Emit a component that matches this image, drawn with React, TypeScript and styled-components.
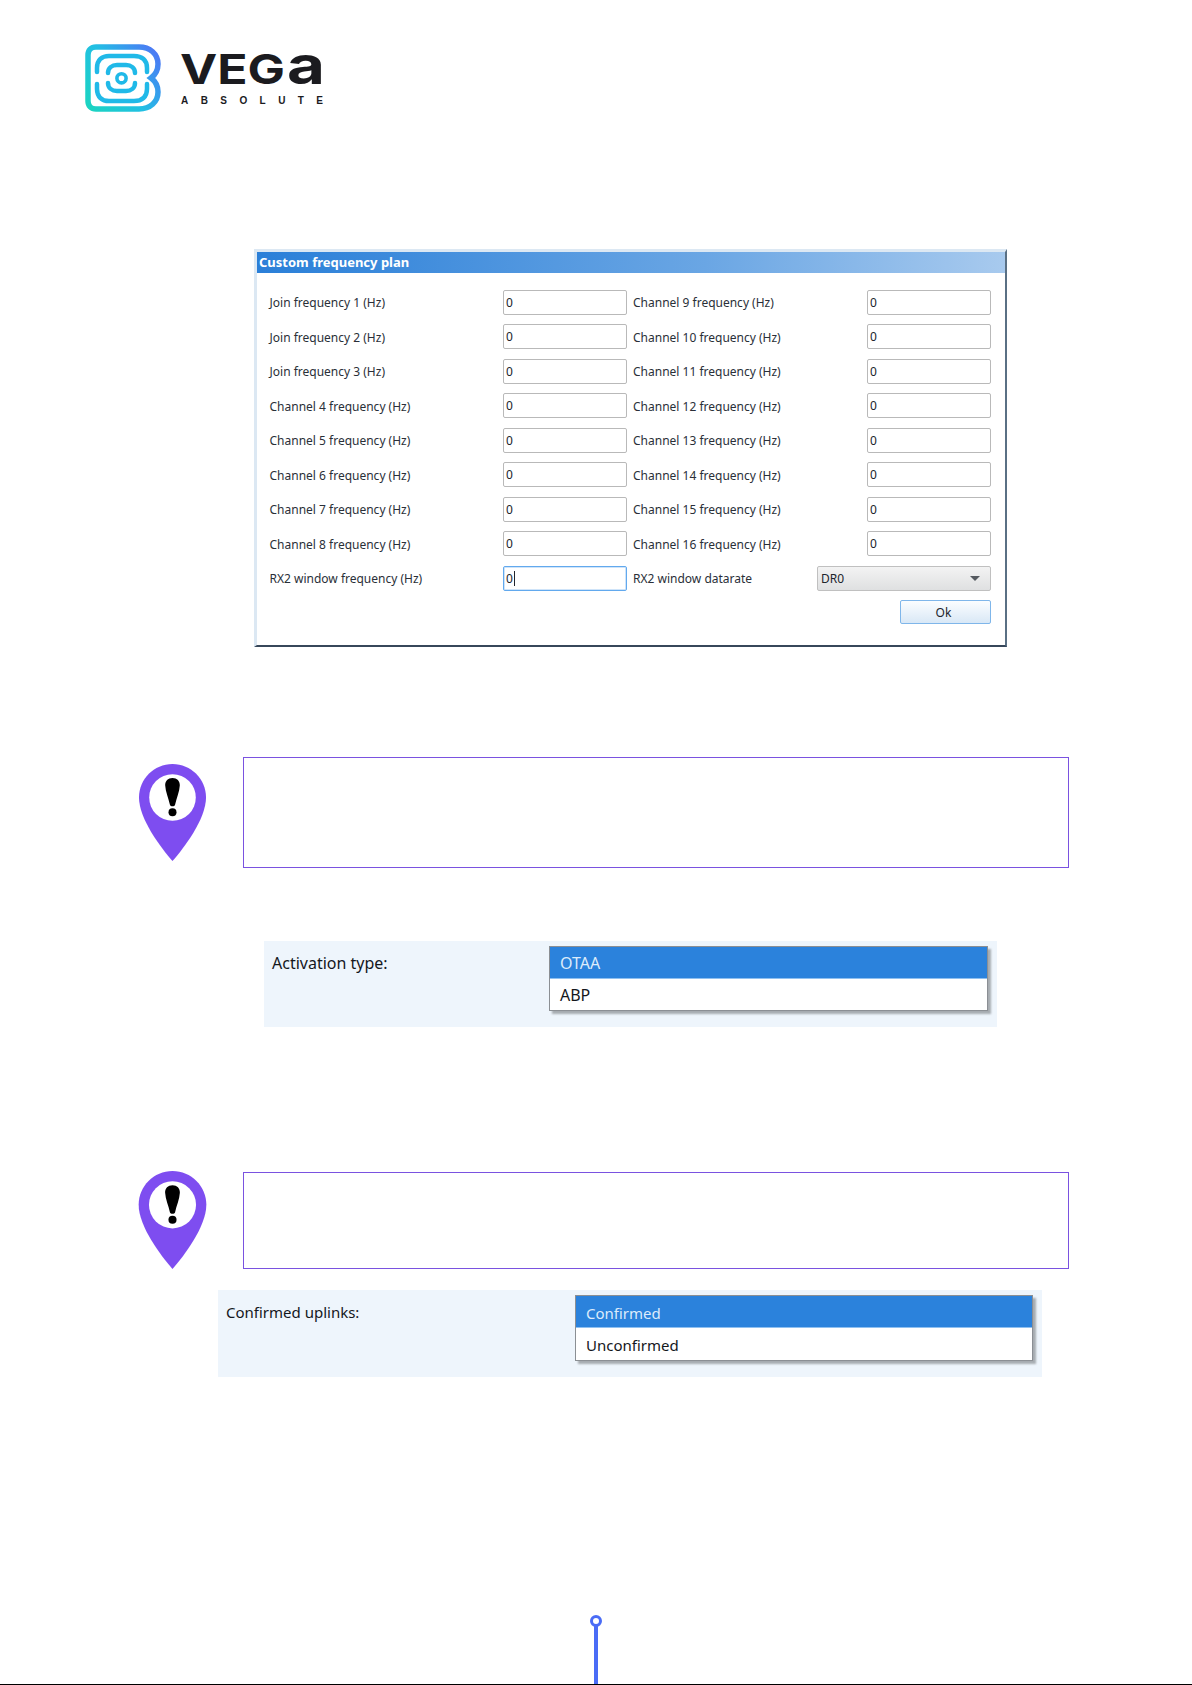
import styled, { createGlobalStyle } from "styled-components";

const GlobalStyle = createGlobalStyle`
  html, body {
    margin: 0;
    padding: 0;
    background: #ffffff;
  }
  body {
    font-family: "Noto Sans", "Liberation Sans", sans-serif;
  }
`;

const Page = styled.div`
  width: 1192px;
  height: 1685px;
  display: flex;
  flex-direction: column;
  overflow: hidden;
`;

const Header = styled.header`
  display: flex;
  align-items: flex-start;
  gap: 18px;
  margin: 44px 0 0 85px;
`;

const Wordmark = styled.svg`
  margin-top: -16px;
  display: block;
`;

const MarkText = styled.text`
  font-family: Inter, "Liberation Sans", sans-serif;
  font-weight: 700;
  fill: #1b1b1f;
`;

const TagText = styled.text`
  font-family: "Liberation Sans", sans-serif;
  font-size: 10px;
  font-weight: 700;
  fill: #1b1b1f;
`;

const Dialog = styled.section`
  box-sizing: border-box;
  width: 753px;
  height: 398px;
  margin: 137px 0 0 254px;
  background: #ffffff;
  border: 3px solid #dce8f3;
  border-right: 2px solid #5a7084;
  border-bottom: 2px solid #37475a;
`;

const TitleBar = styled.div`
  box-sizing: border-box;
  height: 21px;
  padding: 0 0 1px 2px;
  display: flex;
  align-items: center;
  background: linear-gradient(90deg, #2a7fd8 0%, #6aa6e4 60%, #a8caee 100%);
  color: #ffffff;
  font-family: "Noto Sans", sans-serif;
  font-size: 13px;
  font-weight: 700;
`;

const Form = styled.div`
  display: flex;
  flex-direction: column;
  gap: 9.5px;
  padding: 16.5px 0 0 12.5px;
`;

const FormRow = styled.div`
  display: grid;
  grid-template-columns: 233.5px 124px 240px 124px;
  height: 25px;
  align-items: center;
`;

const Label = styled.span<{ $right?: boolean }>`
  padding: 1px 0 0 ${(p) => (p.$right ? "6px" : "0")};
  font-size: 12px;
  color: #2a2f38;
  white-space: nowrap;
`;

const Field = styled.div<{ $focused?: boolean }>`
  box-sizing: border-box;
  height: 25px;
  display: flex;
  align-items: center;
  padding-left: 2px;
  border: 1px solid ${(p) => (p.$focused ? "#62a9ee" : "#b9b9b9")};
  box-shadow: ${(p) => (p.$focused ? "inset 0 0 0 1px #cfe4f9" : "none")};
  border-radius: 2px;
  background: #ffffff;
  font-size: 12px;
  color: #20242c;
`;

const Caret = styled.span`
  width: 1px;
  height: 15px;
  margin-left: 1px;
  background: #20242c;
`;

const DatarateCell = styled.div`
  grid-column: 3 / 5;
  display: flex;
  align-items: center;
  justify-content: space-between;
`;

const Select = styled.div`
  box-sizing: border-box;
  width: 174px;
  height: 25px;
  display: flex;
  align-items: center;
  justify-content: space-between;
  padding: 0 10px 0 3px;
  border: 1px solid #c0c0c0;
  border-radius: 2px;
  background: linear-gradient(180deg, #f3f3f3 0%, #dfe0e1 100%);
  font-size: 12px;
  color: #20242c;
`;

const Arrow = styled.span`
  width: 0;
  height: 0;
  border-left: 5px solid transparent;
  border-right: 5px solid transparent;
  border-top: 5px solid #555a60;
`;

const ButtonRow = styled.div`
  display: flex;
  justify-content: flex-end;
  padding-right: 14px;
`;

const OkButton = styled.button`
  box-sizing: border-box;
  width: 91px;
  height: 24px;
  padding: 0 4px 0 0;
  border: 1px solid #7fb6ea;
  border-radius: 2px;
  background: linear-gradient(180deg, #fbfdff 0%, #d9e8f6 100%);
  font-family: "Noto Sans", sans-serif;
  font-size: 12px;
  color: #20242c;
`;

const NoteRow = styled.div<{ $top: number }>`
  display: flex;
  align-items: flex-start;
  margin: ${(p) => p.$top}px 0 0 139px;
`;

const PinIcon = styled.svg<{ $offset: number; $gap: number; $shift: number }>`
  display: block;
  flex: none;
  margin-top: ${(p) => p.$offset}px;
  margin-right: ${(p) => p.$gap}px;
  margin-left: ${(p) => p.$shift}px;
`;

const NoteBox = styled.div<{ $height: number; $offset: number }>`
  box-sizing: border-box;
  width: 826px;
  height: ${(p) => p.$height}px;
  margin-top: ${(p) => p.$offset}px;
  border: 1px solid #7a52e0;
`;

const OptionPanel = styled.div<{
  $top: number;
  $left: number;
  $width: number;
  $height: number;
  $listLeft: number;
  $fontSize: number;
}>`
  box-sizing: border-box;
  display: grid;
  grid-template-columns: ${(p) => p.$listLeft}px 1fr;
  align-items: start;
  width: ${(p) => p.$width}px;
  height: ${(p) => p.$height}px;
  margin: ${(p) => p.$top}px 0 0 ${(p) => p.$left}px;
  padding: 5px 9px 0 8px;
  background: #eef5fc;
  font-size: ${(p) => p.$fontSize}px;
`;

const PanelLabel = styled.span`
  box-sizing: border-box;
  display: flex;
  align-items: center;
  height: 32px;
  padding-top: 2px;
  font-family: "Noto Sans", sans-serif;
  color: #14171c;
`;

const OptionList = styled.ul`
  margin: 0;
  padding: 0;
  list-style: none;
  border: 1px solid #8b8f94;
  background: #ffffff;
  box-shadow: 3px 3px 2px rgba(0, 0, 0, 0.3);
`;

const Option = styled.li<{ $selected?: boolean; $rowHeight: number }>`
  box-sizing: border-box;
  height: ${(p) => p.$rowHeight}px;
  display: flex;
  align-items: center;
  padding: 2px 0 0 10px;
  background: ${(p) => (p.$selected ? "#2b82dc" : "#ffffff")};
  color: ${(p) => (p.$selected ? "#dcebfb" : "#14171c")};
  border-bottom: ${(p) => (p.$selected ? "1px solid #8fc0f0" : "none")};
`;

const Footer = styled.footer`
  margin-top: auto;
  height: 70px;
  display: flex;
  justify-content: center;
  box-sizing: border-box;
  border-bottom: 1px solid #000000;
`;

const FooterMark = styled.svg`
  display: block;
`;

const leftLabels = [
  "Join frequency 1 (Hz)",
  "Join frequency 2 (Hz)",
  "Join frequency 3 (Hz)",
  "Channel 4 frequency (Hz)",
  "Channel 5 frequency (Hz)",
  "Channel 6 frequency (Hz)",
  "Channel 7 frequency (Hz)",
  "Channel 8 frequency (Hz)",
];

const rightLabels = [
  "Channel 9 frequency (Hz)",
  "Channel 10 frequency (Hz)",
  "Channel 11 frequency (Hz)",
  "Channel 12 frequency (Hz)",
  "Channel 13 frequency (Hz)",
  "Channel 14 frequency (Hz)",
  "Channel 15 frequency (Hz)",
  "Channel 16 frequency (Hz)",
];

function Logo() {
  return (
    <Header>
      <svg width="77" height="68" viewBox="0 0 77 68" fill="none">
        <defs>
          <linearGradient id="outer" x1="0" y1="68" x2="77" y2="10" gradientUnits="userSpaceOnUse">
            <stop offset="0" stopColor="#1ad6bd" />
            <stop offset="0.5" stopColor="#22bfe4" />
            <stop offset="1" stopColor="#4f74f6" />
          </linearGradient>
        </defs>
        <path
          d="M11 3H54C65 3 73 10 73 20C73 26 70 31 66 34C70 37 73 42 73 48C73 58 65 65 54 65H11C6 65 3 62 3 57V11C3 6 6 3 11 3Z"
          stroke="url(#outer)"
          strokeWidth="5.5"
        />
        <g stroke="#20b9e8" strokeWidth="4.5" strokeLinecap="round">
          <path d="M12 28V24C12 16 17 12 24 12H49C57 12 62 16 62 24V28" />
          <path d="M12 40V45C12 53 17 57 24 57H49C57 57 62 53 62 45V40" />
          <path d="M23 29C23 24 27 21 32 21H41C46 21 50 24 50 29" />
          <path d="M23 39C23 44 27 47 32 47H41C46 47 50 44 50 39" />
        </g>
        <circle cx="36.5" cy="34.3" r="4.6" stroke="#20b9e8" strokeWidth="3.6" />
      </svg>
      <Wordmark width="145" height="80" viewBox="0 0 145 80">
        <MarkText x="0" y="56" fontSize="41" textLength="105" lengthAdjust="spacingAndGlyphs">
          VEG
        </MarkText>
        <MarkText x="107" y="56" fontSize="53" textLength="38" lengthAdjust="spacingAndGlyphs">
          a
        </MarkText>
        <TagText x="1" y="76" textLength="142">
          ABSOLUTE
        </TagText>
      </Wordmark>
    </Header>
  );
}

function Pin({ width, height, offset, gap, shift }: { width: number; height: number; offset: number; gap: number; shift: number }) {
  return (
    <PinIcon width={width} height={height} viewBox="0 0 67 97" $offset={offset} $gap={gap} $shift={shift}>
      <path
        d="M33.5 0C52 0 67 15 67 33.5C67 55 45 84 33.5 97C22 84 0 55 0 33.5C0 15 15 0 33.5 0Z"
        fill="#7e4df0"
      />
      <circle cx="33.5" cy="33.5" r="23.3" fill="#ffffff" />
      <path
        d="M33.5 14C38 14 41 17 40.8 21.5C40.5 28 37.5 34 36 41C35.5 42.8 31.5 42.8 31 41C29.5 34 26.5 28 26.2 21.5C26 17 29 14 33.5 14Z"
        fill="#000000"
      />
      <circle cx="33.5" cy="48.3" r="4" fill="#000000" />
    </PinIcon>
  );
}

export default function App() {
  return (
    <Page>
      <GlobalStyle />
      <Logo />

      <Dialog>
        <TitleBar>Custom frequency plan</TitleBar>
        <Form>
          {leftLabels.map((label, i) => (
            <FormRow key={label}>
              <Label>{label}</Label>
              <Field>0</Field>
              <Label $right>{rightLabels[i]}</Label>
              <Field>0</Field>
            </FormRow>
          ))}
          <FormRow>
            <Label>RX2 window frequency (Hz)</Label>
            <Field $focused>
              0<Caret />
            </Field>
            <DatarateCell>
              <Label $right>RX2 window datarate</Label>
              <Select>
                DR0
                <Arrow />
              </Select>
            </DatarateCell>
          </FormRow>
          <ButtonRow>
            <OkButton>Ok</OkButton>
          </ButtonRow>
        </Form>
      </Dialog>

      <NoteRow $top={110}>
        <Pin width={67} height={97} offset={7} gap={37} shift={0} />
        <NoteBox $height={111} $offset={0} />
      </NoteRow>

      <OptionPanel $top={73} $left={264} $width={733} $height={86} $listLeft={277} $fontSize={16}>
        <PanelLabel>Activation type:</PanelLabel>
        <OptionList>
          <Option $selected $rowHeight={31.5}>OTAA</Option>
          <Option $rowHeight={31.5}>ABP</Option>
        </OptionList>
      </OptionPanel>

      <NoteRow $top={144}>
        <Pin width={69} height={98} offset={0} gap={36} shift={-1} />
        <NoteBox $height={97} $offset={1} />
      </NoteRow>

      <OptionPanel $top={21} $left={218} $width={824} $height={87} $listLeft={349} $fontSize={15}>
        <PanelLabel>Confirmed uplinks:</PanelLabel>
        <OptionList>
          <Option $selected $rowHeight={32}>Confirmed</Option>
          <Option $rowHeight={32}>Unconfirmed</Option>
        </OptionList>
      </OptionPanel>

      <Footer>
        <FooterMark width="14" height="69" viewBox="0 0 14 69" fill="none">
          <circle cx="7" cy="6" r="4.5" stroke="#4a6cf6" strokeWidth="3" />
          <path d="M7 10.5V69" stroke="#4a6cf6" strokeWidth="4" />
        </FooterMark>
      </Footer>
    </Page>
  );
}
